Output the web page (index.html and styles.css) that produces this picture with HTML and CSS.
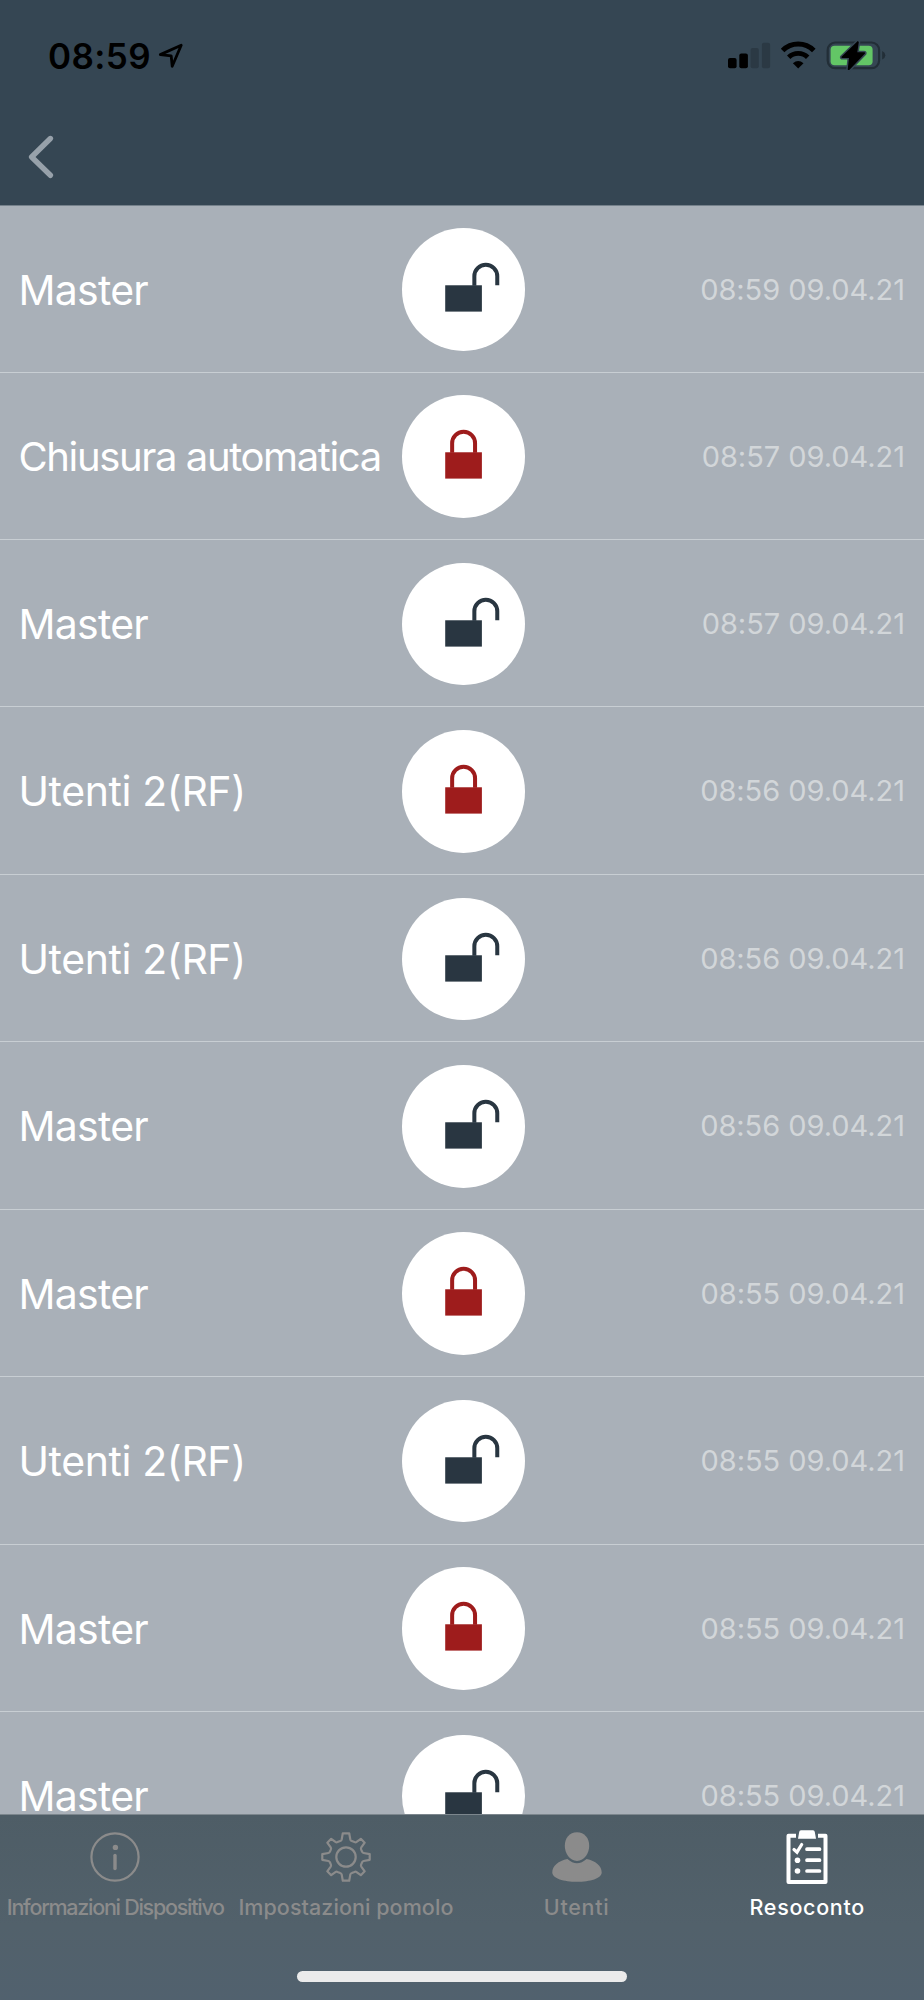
FILE: index.html
```html
<!DOCTYPE html>
<html lang="it">
<head>
<meta charset="utf-8">
<title>Resoconto</title>
<link rel="stylesheet" href="styles.css">
</head>
<body>
<svg class="defs" width="0" height="0">
  <symbol id="open" viewBox="0 0 122 122">
    <rect x="43" y="57" width="36.5" height="26.2"/>
    <path d="M72 57.5V48a11.4 11.4 0 0 1 22.8 0V57" fill="none" stroke="currentColor" stroke-width="4"/>
  </symbol>
  <symbol id="closed" viewBox="0 0 122 122">
    <rect x="43" y="57" width="36.5" height="26.2"/>
    <path d="M49.9 57.5V48a11.4 11.4 0 0 1 22.8 0V57.5" fill="none" stroke="currentColor" stroke-width="4"/>
  </symbol>
</svg>
<div class="screen">
  <header class="header">
    <div class="status">
      <span class="clock">08:59</span>
      <svg class="arrow" width="26" height="26" viewBox="0 0 26 26"><path d="M2.3 11.6 23.2 2.3 14.2 23.3 13.2 12.8Z" fill="none" stroke="#000" stroke-width="2.8" stroke-linejoin="round"/></svg>
      <svg class="indicators" width="160" height="32" viewBox="0 0 160 32">
        <rect x="0" y="18" width="8.6" height="10.3" rx="2"/>
        <rect x="11.3" y="13.4" width="8.6" height="14.9" rx="2"/>
        <rect x="22.6" y="8" width="8.2" height="20.3" rx="2" fill="#2b3944"/>
        <rect x="33.9" y="2.7" width="8.2" height="25.6" rx="2" fill="#2b3944"/>
        <path d="M54.6 10.4A22 22 0 0 1 85.8 10.4" fill="none" stroke="#000" stroke-width="5"/>
        <path d="M60.7 17.2A13.5 13.5 0 0 1 79.7 17.2" fill="none" stroke="#000" stroke-width="4.8"/>
        <path d="M70.2 28.4 64.9 23.2Q70.2 18.7 75.5 23.2Z"/>
        <rect x="99.7" y="2.5" width="51.4" height="25.6" rx="7.5" fill="none" stroke="#222e37" stroke-width="2.2"/>
        <path d="M154.2 11Q157.3 12.5 157.3 15.3T154.2 19.6Z" fill="#222e37"/>
        <rect x="102.6" y="5.7" width="42" height="19.5" rx="4" fill="#63c666"/>
        <path d="M129.8 1 113.5 16.8Q113 18 114.5 18H121L119.7 29.6Q120.5 30.7 121.8 29.4L137 13.6Q137.5 12.2 136 12.2H129.3L130.8 2Z" stroke="#354653" stroke-width="3"/>
        <path d="M129.8 1 113.5 16.8Q113 18 114.5 18H121L119.7 29.6Q120.5 30.7 121.8 29.4L137 13.6Q137.5 12.2 136 12.2H129.3L130.8 2Z"/>
      </svg>
    </div>
    <svg class="back" width="30" height="46" viewBox="0 0 30 46"><path d="M23.4 4.5 4.6 23 23.4 41.3" fill="none" stroke="#97a1aa" stroke-width="5.4" stroke-linecap="round" stroke-linejoin="round"/></svg>
  </header>
  <main class="list">
    <div class="row"><span class="name">Master</span><svg class="lock"><use href="#open"/></svg><time>08:59 09.04.21</time></div>
    <div class="row"><span class="name auto">Chiusura automatica</span><svg class="lock shut"><use href="#closed"/></svg><time>08:57 09.04.21</time></div>
    <div class="row"><span class="name">Master</span><svg class="lock"><use href="#open"/></svg><time>08:57 09.04.21</time></div>
    <div class="row"><span class="name user">Utenti 2(RF)</span><svg class="lock shut"><use href="#closed"/></svg><time>08:56 09.04.21</time></div>
    <div class="row"><span class="name user">Utenti 2(RF)</span><svg class="lock"><use href="#open"/></svg><time>08:56 09.04.21</time></div>
    <div class="row"><span class="name">Master</span><svg class="lock"><use href="#open"/></svg><time>08:56 09.04.21</time></div>
    <div class="row"><span class="name">Master</span><svg class="lock shut"><use href="#closed"/></svg><time>08:55 09.04.21</time></div>
    <div class="row"><span class="name user">Utenti 2(RF)</span><svg class="lock"><use href="#open"/></svg><time>08:55 09.04.21</time></div>
    <div class="row"><span class="name">Master</span><svg class="lock shut"><use href="#closed"/></svg><time>08:55 09.04.21</time></div>
    <div class="row"><span class="name">Master</span><svg class="lock"><use href="#open"/></svg><time>08:55 09.04.21</time></div>
  </main>
  <footer class="footer">
    <nav class="tabs">
      <a class="tab">
        <svg width="56" height="56" viewBox="0 0 56 56"><circle cx="28" cy="28" r="23.6" fill="none" stroke="currentColor" stroke-width="2.2"/><circle cx="28.4" cy="18.4" r="2.7"/><path d="M28 26.5V39.5" stroke="currentColor" stroke-width="3.4" stroke-linecap="round"/></svg>
        <span class="info">Informazioni Dispositivo</span>
      </a>
      <a class="tab">
        <svg width="56" height="56" viewBox="0 0 56 56"><g fill="none" stroke="currentColor" stroke-width="2.2" stroke-linejoin="round"><circle cx="28" cy="28" r="9.7"/><path d="M24.8 4.3H31.2L32.3 10.4Q32.6 11.6 33.8 12L36.5 13.1Q37.6 13.6 38.6 12.9L42.8 9.8 46.7 13.7 43.3 18.4Q42.7 19.3 43.1 20.4L44.1 22.7Q44.5 23.8 45.6 24L51.7 25.2V30.8L45.6 32Q44.5 32.2 44.1 33.3L43.1 35.6Q42.7 36.7 43.3 37.6L46.7 42.3 42.8 46.2 38.6 43.1Q37.6 42.4 36.5 42.9L33.8 44Q32.6 44.4 32.3 45.6L31.2 51.7H24.8L23.7 45.6Q23.4 44.4 22.2 44L19.5 42.9Q18.4 42.4 17.4 43.1L13.2 46.2 9.3 42.3 12.7 37.6Q13.3 36.7 12.9 35.6L11.9 33.3Q11.5 32.2 10.4 32L4.3 30.8V25.2L10.4 24Q11.5 23.8 11.9 22.7L12.9 20.4Q13.3 19.3 12.7 18.4L9.3 13.7 13.2 9.8 17.4 12.9Q18.4 13.6 19.5 13.1L22.2 12Q23.4 11.6 23.7 10.4Z"/></g></svg>
        <span class="settings">Impostazioni pomolo</span>
      </a>
      <a class="tab">
        <svg width="56" height="56" viewBox="0 0 56 56"><path d="M28 3.2C35.5 3.2 40.2 9 40.2 16.8C40.2 24 35.5 32 28 32S15.8 24 15.8 16.8C15.8 9 20.5 3.2 28 3.2Z"/><path d="M18.4 30Q28 38.4 37.6 30C46.5 31.8 52.7 36.8 52.7 43.5C52.7 49.5 41 52.8 28 52.8S3.3 49.5 3.3 43.5C3.3 36.8 9.5 31.8 18.4 30Z"/></svg>
        <span class="wide">Utenti</span>
      </a>
      <a class="tab active">
        <svg width="56" height="56" viewBox="0 0 56 56"><path d="M17 6.8H9.5V53H46.5V6.8H39" fill="none" stroke="currentColor" stroke-width="4" stroke-linejoin="round"/><path d="M20.2 3Q20.4 1.2 22 1.2H34Q35.6 1.2 35.8 3L37 9.7H19Z"/><g fill="none" stroke="currentColor" stroke-width="3.7" stroke-linecap="round"><path d="M28 20.2H40.5M28 31.2H40.5M28 42H40.5"/><path d="M15 20.5 18 23.2 22.7 15.5" stroke-width="3.2"/></g><circle cx="18.5" cy="31.2" r="2.8"/><circle cx="18.5" cy="42" r="2.8"/></svg>
        <span class="wide">Resoconto</span>
      </a>
    </nav>
    <div class="home"></div>
  </footer>
</div>
</body>
</html>
```
FILE: styles.css
```css
* { box-sizing: border-box; }
body { margin: 0; font-family: Inter, "Liberation Sans", sans-serif; }
.defs { display: block; }
.screen { width: 924px; height: 2000px; overflow: hidden; display: flex; flex-direction: column; background: #a9b0b8; }
.header { height: 206px; flex: none; background: #354653; border-bottom: 1px solid #75818b; }
.status { display: flex; align-items: flex-start; padding: 34px 33px 0 48px; height: 130px; }
.clock { font-size: 35px; font-weight: 600; line-height: 44px; letter-spacing: 0.4px; width: 110px; }
.arrow { margin-top: 9px; }
.indicators { margin: 6px 3px 0 auto; }
.back { display: block; margin: 4px 0 0 27px; }
.list { height: 1607.5px; flex: none; overflow: hidden; }
.row { height: 167.45px; padding-top: 1.6px; display: grid; grid-template-columns: 402px 122.6px 1fr; align-items: center; border-bottom: 1px solid #c8ced3; }
.row:first-child { height: 166.5px; }
.name { padding-left: 18.5px; color: #fff; font-size: 41px; line-height: 34px; letter-spacing: -0.75px; white-space: nowrap; }
.user { letter-spacing: -0.4px; }
.auto { font-size: 40px; letter-spacing: -1.38px; }
.lock { width: 122.6px; height: 122.6px; border-radius: 50%; background: #fff; color: #293641; fill: currentColor; }
.shut { color: #9e1c1c; }
time { justify-self: end; padding-right: 19px; font-size: 29px; line-height: 34px; letter-spacing: -0.04px; color: #d2d6d9; white-space: nowrap; }
.footer { flex: 1; border-top: 1px solid #7c868d; background: linear-gradient(#4e5d66, #52616b 60%, #51616e); }
.tabs { display: grid; grid-template-columns: repeat(4, minmax(0, 1fr)); padding: 14.5px 1.5px 0 0; color: #8b8b8b; }
.tab { display: flex; flex-direction: column; align-items: center; fill: currentColor; font-size: 21.5px; font-weight: 500; line-height: 26px; white-space: nowrap; }
.tab span { margin-top: 9px; }
.info { letter-spacing: -1.26px; }
.settings { letter-spacing: 0.07px; }
.wide { letter-spacing: 0.68px; }
.active { color: #fff; }
.home { width: 330px; height: 11px; margin: 51px auto 0; border-radius: 6px; background: #ebebeb; }
```
